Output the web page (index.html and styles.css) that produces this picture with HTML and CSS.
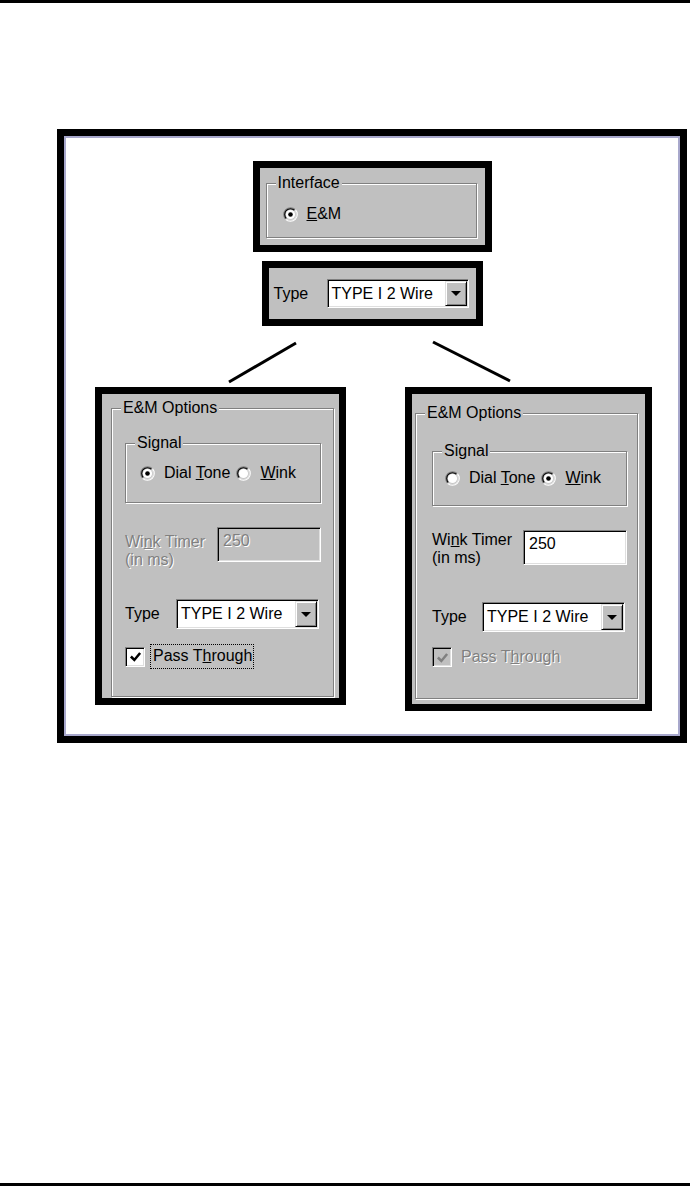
FILE: index.html
```html
<!DOCTYPE html>
<html lang="en">
<head>
    <meta charset="UTF-8">
    <title>E&amp;M Options</title>
    <link rel="stylesheet" href="styles.css">
</head>
<body>
    <div class="page">
        <div class="rule"></div>

        <div class="figure">
            <div class="dlg iface">
                <fieldset class="group group-iface">
                    <legend>Interface</legend>
                    <div class="group-body">
                        <label class="radio">
                            <svg viewBox="0 0 13 13"><path d="M2.26 10.74A6 6 0 0 1 10.74 2.26" stroke="#808080"/><path d="M10.74 2.26A6 6 0 0 1 2.26 10.74" stroke="#fff"/><path d="M2.96 10.04A5 5 0 0 1 10.04 2.96" stroke="#000"/><path d="M10.04 2.96A5 5 0 0 1 2.96 10.04" stroke="#dfdfdf"/><circle cx="6.5" cy="6.5" r="4" fill="#fff"/><circle cx="6.5" cy="6.5" r="2" fill="#000"/></svg>
                            <span><u>E</u>&amp;M</span>
                        </label>
                    </div>
                </fieldset>
            </div>

            <div class="dlg typebox">
                <span>Type</span>
                <span class="select">
                    <span class="select-value">TYPE I 2 Wire</span>
                    <span class="select-btn"></span>
                </span>
            </div>

            <svg class="links" width="616" height="61" viewBox="0 0 616 61">
                <line x1="232" y1="17" x2="165" y2="56"/>
                <line x1="369" y1="16" x2="446" y2="55"/>
            </svg>

            <div class="panels">
                <!-- Dial Tone: timer disabled -->
                <div class="dlg opts opts-left">
                    <fieldset class="group group-opts">
                        <legend>E&amp;M Options</legend>
                        <div class="group-body">
                            <fieldset class="group group-signal">
                                <legend>Signal</legend>
                                <div class="group-body radios">
                                    <label class="radio">
                                        <svg viewBox="0 0 13 13"><path d="M2.26 10.74A6 6 0 0 1 10.74 2.26" stroke="#808080"/><path d="M10.74 2.26A6 6 0 0 1 2.26 10.74" stroke="#fff"/><path d="M2.96 10.04A5 5 0 0 1 10.04 2.96" stroke="#000"/><path d="M10.04 2.96A5 5 0 0 1 2.96 10.04" stroke="#dfdfdf"/><circle cx="6.5" cy="6.5" r="4" fill="#fff"/><circle cx="6.5" cy="6.5" r="2" fill="#000"/></svg>
                                        <span>Dial <u>T</u>one</span>
                                    </label>
                                    <label class="radio">
                                        <svg viewBox="0 0 13 13"><path d="M2.26 10.74A6 6 0 0 1 10.74 2.26" stroke="#808080"/><path d="M10.74 2.26A6 6 0 0 1 2.26 10.74" stroke="#fff"/><path d="M2.96 10.04A5 5 0 0 1 10.04 2.96" stroke="#000"/><path d="M10.04 2.96A5 5 0 0 1 2.96 10.04" stroke="#dfdfdf"/><circle cx="6.5" cy="6.5" r="4" fill="#fff"/></svg>
                                        <span><u>W</u>ink</span>
                                    </label>
                                </div>
                            </fieldset>
                            <div class="row row-timer">
                                <span class="timer-label off">Wi<u>n</u>k Timer<br>(in ms)</span>
                                <span class="field field-off"><span class="off">250</span></span>
                            </div>
                            <div class="row row-type">
                                <span>Type</span>
                                <span class="select">
                                    <span class="select-value">TYPE I 2 Wire</span>
                                    <span class="select-btn"></span>
                                </span>
                            </div>
                            <div class="row row-check">
                                <span class="check">
                                    <svg viewBox="0 0 13 13"><path d="M2.5 6.5l3 3L10.5 3.5" stroke="#000"/></svg>
                                </span>
                                <span class="focus">Pass T<u>h</u>rough</span>
                            </div>
                        </div>
                    </fieldset>
                </div>

                <!-- Wink: timer enabled, pass through disabled -->
                <div class="dlg opts opts-right">
                    <fieldset class="group group-opts">
                        <legend>E&amp;M Options</legend>
                        <div class="group-body">
                            <fieldset class="group group-signal">
                                <legend>Signal</legend>
                                <div class="group-body radios">
                                    <label class="radio">
                                        <svg viewBox="0 0 13 13"><path d="M2.26 10.74A6 6 0 0 1 10.74 2.26" stroke="#808080"/><path d="M10.74 2.26A6 6 0 0 1 2.26 10.74" stroke="#fff"/><path d="M2.96 10.04A5 5 0 0 1 10.04 2.96" stroke="#000"/><path d="M10.04 2.96A5 5 0 0 1 2.96 10.04" stroke="#dfdfdf"/><circle cx="6.5" cy="6.5" r="4" fill="#fff"/></svg>
                                        <span>Dial <u>T</u>one</span>
                                    </label>
                                    <label class="radio">
                                        <svg viewBox="0 0 13 13"><path d="M2.26 10.74A6 6 0 0 1 10.74 2.26" stroke="#808080"/><path d="M10.74 2.26A6 6 0 0 1 2.26 10.74" stroke="#fff"/><path d="M2.96 10.04A5 5 0 0 1 10.04 2.96" stroke="#000"/><path d="M10.04 2.96A5 5 0 0 1 2.96 10.04" stroke="#dfdfdf"/><circle cx="6.5" cy="6.5" r="4" fill="#fff"/><circle cx="6.5" cy="6.5" r="2" fill="#000"/></svg>
                                        <span><u>W</u>ink</span>
                                    </label>
                                </div>
                            </fieldset>
                            <div class="row row-timer">
                                <span class="timer-label">Wi<u>n</u>k Timer<br>(in ms)</span>
                                <span class="field">250</span>
                            </div>
                            <div class="row row-type">
                                <span>Type</span>
                                <span class="select">
                                    <span class="select-value">TYPE I 2 Wire</span>
                                    <span class="select-btn"></span>
                                </span>
                            </div>
                            <div class="row row-check">
                                <span class="check check-off">
                                    <svg viewBox="0 0 13 13"><path d="M2.5 6.5l3 3L10.5 3.5" stroke="#808080"/></svg>
                                </span>
                                <span class="check-label off">Pass T<u>h</u>rough</span>
                            </div>
                        </div>
                    </fieldset>
                </div>
            </div>
        </div>

        <div class="rule rule-bottom"></div>
    </div>
</body>
</html>
```

FILE: styles.css
```css
body {
    margin: 0;
    background-color: #fff;
    font-family: 'Liberation Sans', Arial, sans-serif;
    font-size: 16px;
    color: #000;
}
.page {
    display: flex;
    flex-direction: column;
    height: 1186px;
}
.rule {
    flex-shrink: 0;
    width: 690px;
    height: 3px;
    background-color: #000;
}
.rule-bottom {
    margin-top: auto;
}
.figure {
    box-sizing: border-box;
    display: flex;
    flex-direction: column;
    width: 630px;
    height: 614px;
    margin: 126px 0 0 57px;
    padding-top: 25px;
    border: 7px solid #000;
    box-shadow: inset 0 0 0 2px #a8a8cc;
}

/* grey dialog cut-outs with the thick black frame */
.dlg {
    box-sizing: border-box;
    display: flex;
    flex-direction: column;
    border: 7px solid #000;
    background-color: #c0c0c0;
}
.iface {
    width: 239px;
    height: 91px;
    margin: 0 auto;
    padding: 6px 8px 7px 6px;
}
.typebox {
    flex-direction: row;
    align-items: center;
    justify-content: space-between;
    width: 221px;
    height: 65px;
    margin: 9px auto 0;
    padding: 0 7px 0 5px;
}
.links {
    display: block;
    flex-shrink: 0;
}
.links line {
    stroke: #000;
    stroke-width: 3;
}
.panels {
    display: flex;
    align-items: flex-start;
    gap: 59px;
    margin-left: 31px;
}
.opts-left {
    width: 251px;
    height: 318px;
    padding: 5px 5px 1px 9px;
}
.opts-right {
    width: 247px;
    height: 324px;
    padding: 10px 7px 5px 3px;
}

/* etched group boxes */
.group {
    min-width: 0;
    margin: 0;
    padding: 0;
    border: 1px solid #808080;
    box-shadow: inset 1px 1px 0 #fff, 1px 1px 0 #fff;
}
.group legend {
    margin-left: 9px;
    padding: 0 2px;
    line-height: 18px;
    background-color: #c0c0c0;
}
.group-iface {
    flex: 1;
}
.group-iface .group-body {
    padding: 13px 0 0 16px;
}
.group-opts {
    flex: 1;
}
.opts-left .group-opts > .group-body {
    padding: 17px 12px 0 13px;
}
.opts-right .group-opts > .group-body {
    padding: 20px 10px 0 16px;
}
.opts-left .radios {
    padding: 12px 0 20px 14px;
}
.opts-right .radios {
    padding: 9px 0 18px 12px;
}

.radios {
    display: flex;
    gap: 6px;
}
.radio {
    display: flex;
    align-items: center;
    gap: 9px;
    line-height: 18px;
}
.radio svg {
    flex-shrink: 0;
    width: 15px;
    height: 15px;
}
.radio path,
.check path {
    fill: none;
}
.check path {
    stroke-width: 2.2;
}

.row {
    display: flex;
    line-height: 18px;
}
.row-timer {
    align-items: flex-start;
    height: 35px;
    margin-top: 24px;
}
.opts-left .timer-label {
    padding-top: 6px;
}
.opts-right .timer-label {
    padding-top: 1px;
}
.row-type {
    align-items: center;
    margin-top: 37px;
}
.row-check {
    align-items: center;
    gap: 5px;
    margin-top: 15px;
}
.row .field,
.row .select {
    margin-left: auto;
}

/* sunken controls */
.field,
.select,
.check {
    box-sizing: border-box;
    background-color: #fff;
    border: 1px solid;
    border-color: #808080 #fff #fff #808080;
    box-shadow: inset 1px 1px 0 #000, inset -1px -1px 0 #dfdfdf;
}
.field {
    width: 104px;
    height: 35px;
    padding: 4px 0 0 5px;
    line-height: 18px;
}
.field-off {
    background-color: #c0c0c0;
}
.select {
    display: flex;
    width: 143px;
    height: 30px;
    margin-right: 2px;
    padding: 1px;
}
.typebox .select {
    width: 142px;
    height: 29px;
    margin-right: 0;
}
.select-value {
    flex: 1;
    align-self: center;
    padding-left: 3px;
    white-space: nowrap;
}
.select-btn {
    box-sizing: border-box;
    display: flex;
    align-items: center;
    justify-content: center;
    width: 22px;
    background-color: #c0c0c0;
    border: 1px solid;
    border-color: #dfdfdf #000 #000 #dfdfdf;
    box-shadow: inset 1px 1px 0 #fff, inset -1px -1px 0 #808080;
}
.select-btn::after {
    content: '';
    border-left: 5px solid transparent;
    border-right: 5px solid transparent;
    border-top: 5px solid #000;
}
.check {
    display: flex;
    align-items: center;
    justify-content: center;
    flex-shrink: 0;
    width: 20px;
    height: 20px;
}
.check svg {
    width: 15px;
    height: 15px;
}
.check-off {
    background-color: #c0c0c0;
}
.focus {
    width: 100px;
    padding: 2px 0 3px 2px;
    border: 1px dotted #000;
    white-space: nowrap;
    overflow: hidden;
}
.check-label {
    margin-left: 4px;
}
.off {
    color: #808080;
    text-shadow: 1px 1px 0 #fff;
}
```
